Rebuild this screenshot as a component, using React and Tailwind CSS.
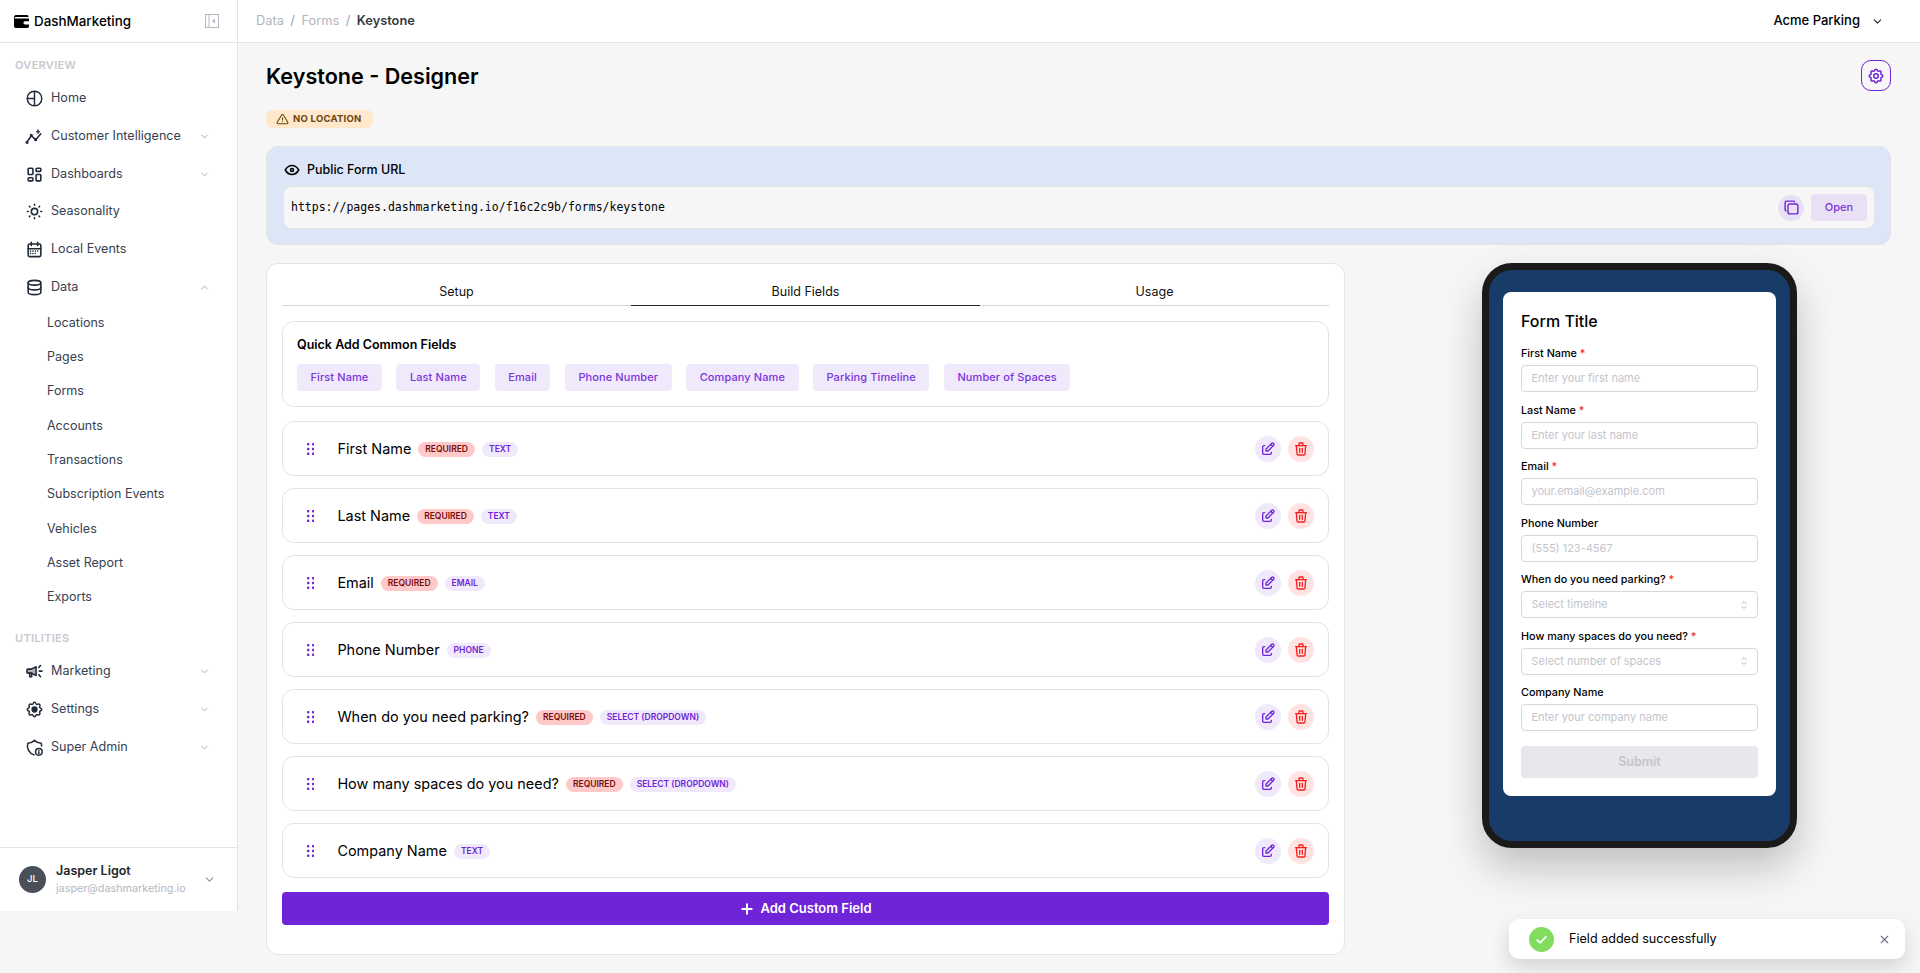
import React from 'react';
import { TbLayoutDashboard, TbSun, TbCalendarMonth, TbDatabase, TbChevronDown, TbChevronUp, TbSettings, TbEye, TbAlertTriangle, TbCopy, TbEdit, TbTrash, TbSelector, TbX, TbPlus } from 'react-icons/tb';

const HomeIcon = ({ className }) => (
  <svg viewBox="0 0 24 24" fill="none" stroke="currentColor" strokeWidth="1.8" className={className}>
    <circle cx="12" cy="12" r="9.2" />
    <path d="M12 3v18M3 12h9" />
  </svg>
);
const SparkLineIcon = ({ className }) => (
  <svg viewBox="0 0 24 24" fill="none" stroke="currentColor" strokeWidth="1.9" strokeLinecap="round" strokeLinejoin="round" className={className}>
    <path d="M2.5 19l5.5-8 5.5 5 6.5-7.5" />
    <circle cx="2.5" cy="19.5" r="1" fill="currentColor" />
    <circle cx="8" cy="10.5" r="1" fill="currentColor" />
    <circle cx="13.5" cy="16" r="1" fill="currentColor" />
    <path d="M16.5 3.5l.7 1.8 1.8.7-1.8.7-.7 1.8-.7-1.8-1.8-.7 1.8-.7z" fill="currentColor" strokeWidth="0.8" />
  </svg>
);
const MegaIcon = ({ className }) => (
  <svg viewBox="0 0 24 24" fill="none" stroke="currentColor" strokeWidth="2" strokeLinecap="round" strokeLinejoin="round" className={className}>
    <path d="M14 6v11l-6-3H3.5a1 1 0 0 1-1-1v-3a1 1 0 0 1 1-1H8z" fill="currentColor" fillOpacity="0.35" />
    <path d="M6 14v4.5h2.5V14" />
    <path d="M18 11.5h3.5M17.5 7l2-2.5M17.5 16l2 2.5" />
  </svg>
);
const GearFillIcon = ({ className }) => (
  <svg viewBox="0 0 24 24" fill="none" stroke="currentColor" strokeWidth="1.9" strokeLinecap="round" strokeLinejoin="round" className={className}>
    <path d="M10.3 4.3c.4-1.8 3-1.8 3.4 0a1.7 1.7 0 0 0 2.6 1c1.5-.9 3.3.8 2.4 2.4a1.7 1.7 0 0 0 1 2.6c1.8.4 1.8 3 0 3.4a1.7 1.7 0 0 0-1 2.6c.9 1.5-.8 3.3-2.4 2.4a1.7 1.7 0 0 0-2.6 1c-.4 1.8-3 1.8-3.4 0a1.7 1.7 0 0 0-2.6-1c-1.5.9-3.3-.8-2.4-2.4a1.7 1.7 0 0 0-1-2.6c-1.8-.4-1.8-3 0-3.4a1.7 1.7 0 0 0 1-2.6c-.9-1.5.8-3.3 2.4-2.4a1.7 1.7 0 0 0 2.6-1z" />
    <circle cx="12" cy="12" r="3" fill="currentColor" />
  </svg>
);
const ShieldInfoIcon = ({ className }) => (
  <svg viewBox="0 0 24 24" fill="none" stroke="currentColor" strokeWidth="1.9" strokeLinecap="round" strokeLinejoin="round" className={className}>
    <path d="M11.5 21.3A12 12 0 0 1 3.5 6.5 12 12 0 0 0 12 3a12 12 0 0 0 8.5 3.5c.3 1.2.4 2.4.4 3.6" />
    <circle cx="17.5" cy="17.5" r="4.2" />
    <path d="M17.5 15.8v.1M17.5 17.5v2" />
  </svg>
);
const Logo = () => (
  <svg viewBox="0 0 15 13" className="w-[15px] h-[13px] text-black" fill="currentColor">
    <path fillRule="evenodd" d="M2 0h11a1.5 1.5 0 0 1 1.5 1.5V2H1.5a.8.8 0 0 0 0 1.6H15v2.6h-4a1.6 1.6 0 0 0 0 3.2h4V11.2A1.8 1.8 0 0 1 13.2 13H1.8A1.8 1.8 0 0 1 0 11.2V2a2 2 0 0 1 2-2z" />
  </svg>
);
const CollapseIcon = () => (
  <svg viewBox="0 0 14 14" className="w-[14px] h-[14px] text-[#b4b8c0]" fill="none" stroke="currentColor" strokeWidth="1">
    <rect x="0.5" y="0.5" width="13" height="13" />
    <path d="M4 .5v13" />
    <path d="M10 4.5v5L7 7z" fill="currentColor" stroke="none" />
  </svg>
);
const Grip = () => (
  <svg viewBox="0 0 7.4 12" className="w-[7.4px] h-[12px] text-[#7024d8]" fill="currentColor">
    <rect x="0" y="0" width="2.4" height="2.4" rx="0.8" /><rect x="5" y="0" width="2.4" height="2.4" rx="0.8" />
    <rect x="0" y="4.8" width="2.4" height="2.4" rx="0.8" /><rect x="5" y="4.8" width="2.4" height="2.4" rx="0.8" />
    <rect x="0" y="9.6" width="2.4" height="2.4" rx="0.8" /><rect x="5" y="9.6" width="2.4" height="2.4" rx="0.8" />
  </svg>
);

const ic = 'w-[19px] h-[19px] shrink-0';
const NavItem = ({ icon: I, label, chevron }) => (
  <div className="h-[37.7px] flex items-center pl-[25px] pr-[27px] text-[12.6px] text-[#374151]">
    <I className={`${ic} text-[#1f2937]`} />
    <span className="ml-[7px] flex-1">{label}</span>
    {chevron === 'down' && <TbChevronDown className="w-[11px] h-[11px] text-[#9ca3af]" />}
    {chevron === 'up' && <TbChevronUp className="w-[11px] h-[11px] text-[#9ca3af]" />}
  </div>
);

const subs = ['Locations', 'Pages', 'Forms', 'Accounts', 'Transactions', 'Subscription Events', 'Vehicles', 'Asset Report', 'Exports'];

const Sidebar = () => (
  <aside className="w-[238px] h-[911px] shrink-0 bg-white border-r border-[#e3e3e3] flex flex-col">
    <div className="h-[43px] shrink-0 border-b border-[#e3e3e3] flex items-center pl-[14px] pr-[18px]">
      <Logo />
      <span className="ml-[5px] flex-1 text-[13.4px] font-medium text-black">DashMarketing</span>
      <CollapseIcon />
    </div>
    <div className="flex-1 flex flex-col">
      <div className="pl-[15px] mt-[15px] mb-[7px] h-[15px] leading-[15px] text-[11px] font-semibold tracking-[0.3px] text-[#c7c9d1]">OVERVIEW</div>
      <NavItem icon={HomeIcon} label="Home" />
      <NavItem icon={SparkLineIcon} label="Customer Intelligence" chevron="down" />
      <NavItem icon={TbLayoutDashboard} label="Dashboards" chevron="down" />
      <NavItem icon={TbSun} label="Seasonality" />
      <NavItem icon={TbCalendarMonth} label="Local Events" />
      <NavItem icon={TbDatabase} label="Data" chevron="up" />
      <div className="flex flex-col">
        {subs.map((s) => (
          <div key={s} className="h-[34.3px] flex items-center pl-[47px] text-[12.5px] text-[#374151]">{s}</div>
        ))}
      </div>
      <div className="pl-[15px] mt-[16px] mb-[7px] h-[15px] leading-[15px] text-[11px] font-semibold tracking-[0.3px] text-[#c7c9d1]">UTILITIES</div>
      <NavItem icon={MegaIcon} label="Marketing" chevron="down" />
      <NavItem icon={GearFillIcon} label="Settings" chevron="down" />
      <NavItem icon={ShieldInfoIcon} label="Super Admin" chevron="down" />
    </div>
    <div className="h-[64px] shrink-0 border-t border-[#e3e3e3] flex items-center pl-[19px] pr-[21px]">
      <div className="w-[27px] h-[27px] rounded-full bg-[#495057] text-white text-[9.5px] font-medium flex items-center justify-center">JL</div>
      <div className="ml-[10px] flex-1">
        <div className="text-[12.5px] leading-[18px] font-semibold text-[#212529]">Jasper Ligot</div>
        <div className="text-[10.8px] leading-[18px] text-[#b4b8bf]">jasper@dashmarketing.io</div>
      </div>
      <TbChevronDown className="w-[13px] h-[13px] text-[#8f949c]" />
    </div>
  </aside>
);

const chips = ['First Name', 'Last Name', 'Email', 'Phone Number', 'Company Name', 'Parking Timeline', 'Number of Spaces'];
const fields = [
  ['First Name', true, 'TEXT'],
  ['Last Name', true, 'TEXT'],
  ['Email', true, 'EMAIL'],
  ['Phone Number', false, 'PHONE'],
  ['When do you need parking?', true, 'SELECT (DROPDOWN)'],
  ['How many spaces do you need?', true, 'SELECT (DROPDOWN)'],
  ['Company Name', false, 'TEXT'],
];

const FieldRow = ({ name, req, type }) => (
  <div className="h-[55px] shrink-0 bg-white border border-[#e3e3e3] rounded-[12px] flex items-center pl-[24px] pr-[14px] pt-[1px]">
    <Grip />
    <span className="ml-[23px] text-[14.45px] font-normal text-black">{name}</span>
    {req && <span className="ml-[7px] h-[15px] px-[7px] rounded-full bg-[#ffc9c9] text-[#7a0b0b] text-[8.5px] font-semibold leading-[15px]">REQUIRED</span>}
    <span className="ml-[7px] h-[15px] px-[7px] rounded-full bg-[#f0e8fb] text-[#7024d8] text-[8.5px] font-semibold leading-[15px]">{type}</span>
    <div className="ml-auto flex items-center gap-[7px]">
      <div className="w-[26px] h-[26px] rounded-full bg-[#f0e8fb] flex items-center justify-center"><TbEdit className="w-[16px] h-[16px] text-[#7024d8]" /></div>
      <div className="w-[26px] h-[26px] rounded-full bg-[#ffe3e3] flex items-center justify-center"><TbTrash className="w-[16px] h-[16px] text-[#fa1e1e]" /></div>
    </div>
  </div>
);

const FormInput = ({ label, req, ph, select }) => (
  <div className="h-[47px]">
    <div className="h-[20px] text-[10.8px] leading-[18px] font-medium text-black">
      {label}{req && <span className="text-[#fa1e1e]"> *</span>}
    </div>
    <div className="h-[27px] bg-white border border-[#d7d7dc] rounded-[4px] flex items-center pl-[9.5px] pr-[7px] text-[11px] text-[#c4c4ca]">
      <span className="flex-1">{ph}</span>
      {select && <TbSelector className="w-[12px] h-[12px] text-[#b4b4ba]" />}
    </div>
  </div>
);

export default function App() {
  return (
    <div className="h-[973px] overflow-hidden flex bg-[#f6f6f6] font-['Inter',sans-serif]">
      <Sidebar />
      <div className="flex-1 min-w-0 flex flex-col">
        <header className="h-[43px] shrink-0 bg-white border-b border-[#e3e3e3] flex items-center pl-[18px] pr-[36px] text-[12.8px]">
          <span className="text-[#b1b5bc]">Data</span>
          <span className="mx-[6.5px] text-[#9ca3af]">/</span>
          <span className="text-[#b1b5bc]">Forms</span>
          <span className="mx-[6.5px] text-[#9ca3af]">/</span>
          <span className="font-semibold text-[#343a40]">Keystone</span>
          <span className="ml-auto text-[13px] font-medium text-black">Acme Parking</span>
          <TbChevronDown className="ml-[11px] w-[13px] h-[13px] text-[#212529]" />
        </header>
        <main className="flex-1 min-h-0 pl-[28px] pr-[29px]">
          <div className="flex items-start justify-between pt-[18px]">
            <div>
              <h1 className="text-[21.6px] leading-[30px] font-semibold text-black">Keystone - Designer</h1>
              <div className="mt-[19px] flex w-fit items-center h-[18px] pl-[10px] pr-[11px] rounded-[6px] bg-[#ffe8cc] text-[#6b4510] text-[9.5px] font-bold tracking-[0.25px]">
                <TbAlertTriangle className="w-[13px] h-[13px] mr-[4px]" />NO LOCATION
              </div>
            </div>
            <div className="mt-[-1px] w-[30px] h-[31px] rounded-[10px] border border-[#7024d8] flex items-center justify-center">
              <TbSettings className="w-[18px] h-[18px] text-[#7024d8]" />
            </div>
          </div>
          <section className="mt-[18px] h-[99px] rounded-[12px] bg-[#dce6f7] border border-[#e3e3e3] pl-[16px] pr-[15px] flex flex-col">
            <div className="h-[39px] pt-[7px] flex items-center text-[12.5px] font-medium text-black">
              <TbEye className="w-[18px] h-[18px] mr-[6px]" />Public Form URL
            </div>
            <div className="h-[43px] rounded-[8px] bg-[#f6f6f6] border border-[#e3e3e3] flex items-center pl-[7px] pr-[7px]">
              <span className="flex-1 font-['DejaVu_Sans_Mono',monospace] text-[11.5px] text-black">https://pages.dashmarketing.io/f16c2c9b/forms/keystone</span>
              <div className="w-[26px] h-[26px] rounded-full bg-[#e9e0f6] flex items-center justify-center"><TbCopy className="w-[17px] h-[17px] text-[#7024d8]" /></div>
              <div className="ml-[7px] w-[56px] h-[27px] rounded-[4px] bg-[#e9e0f6] flex items-center justify-center text-[11px] font-medium text-[#7a34dc]">Open</div>
            </div>
          </section>
          <div className="mt-[18px] flex items-start">
            <section className="w-[1079px] shrink-0 h-[692px] bg-white border border-[#e3e3e3] rounded-[12px] px-[15px] pt-[15px]">
              <div className="flex h-[27px] text-[12.5px] text-[#111] border-b border-[#d5d5d5]">
                <div className="flex-1 flex items-center justify-center">Setup</div>
                <div className="flex-1 flex items-center justify-center border-b border-[#212529] -mb-px">Build Fields</div>
                <div className="flex-1 flex items-center justify-center">Usage</div>
              </div>
              <div className="mt-[15px] h-[86px] border border-[#e3e3e3] rounded-[12px] px-[14px] pt-[14px]">
                <div className="text-[12.5px] leading-[18px] font-semibold text-black">Quick Add Common Fields</div>
                <div className="mt-[10px] flex gap-[14.5px]">
                  {chips.map((c) => (
                    <div key={c} className="h-[27px] px-[13.5px] rounded-[4px] bg-[#f0e8fb] flex items-center text-[11px] font-medium tracking-[0.1px] text-[#7a34dc]">{c}</div>
                  ))}
                </div>
              </div>
              <div className="mt-[14px] flex flex-col gap-[12px]">
                {fields.map(([n, r, t]) => <FieldRow key={n} name={n} req={r} type={t} />)}
              </div>
              <div className="mt-[14px] h-[33px] pt-[1px] rounded-[4px] bg-[#7024d8] flex items-center justify-center text-white text-[13px] font-semibold">
                <TbPlus className="w-[16px] h-[16px] mr-[5px]" strokeWidth={3} />Add Custom Field
              </div>
            </section>
            <div className="flex-1 ml-[43px] flex justify-center">
              <div className="w-[315px] h-[585px] rounded-[30px] border-[7px] border-[#1a1a1a] bg-[#193b68] shadow-[0_20px_40px_rgba(0,0,0,0.22)] px-[14px] pt-[22px]">
                <div className="h-[504px] bg-white rounded-[8px] px-[18px] pt-[18px]">
                  <div className="h-[22px] text-[16px] leading-[22px] font-medium text-black">Form Title</div>
                  <div className="mt-[13px] flex flex-col gap-[9.5px]">
                    <FormInput label="First Name" req ph="Enter your first name" />
                    <FormInput label="Last Name" req ph="Enter your last name" />
                    <FormInput label="Email" req ph="your.email@example.com" />
                    <FormInput label="Phone Number" ph="(555) 123-4567" />
                    <FormInput label="When do you need parking?" req ph="Select timeline" select />
                    <FormInput label="How many spaces do you need?" req ph="Select number of spaces" select />
                    <FormInput label="Company Name" ph="Enter your company name" />
                  </div>
                  <div className="mt-[15px] h-[32px] rounded-[4px] bg-[#e8e7eb] flex items-center justify-center text-[12.5px] font-semibold text-[#c4c4ca]">Submit</div>
                </div>
              </div>
            </div>
          </div>
        </main>
      </div>
      <div className="absolute left-[1509px] top-[919px] w-[396px] h-[40px] bg-white rounded-[10px] shadow-[0_8px_20px_rgba(0,0,0,0.15)] flex items-center pl-[20px] pr-[14px]">
        <div className="w-[25px] h-[25px] rounded-full bg-[#82dc5f] flex items-center justify-center">
          <svg viewBox="0 0 12 12" className="w-[13px] h-[13px]" fill="none" stroke="white" strokeWidth="1.6" strokeLinecap="round" strokeLinejoin="round"><path d="M2 6.5l2.8 2.5L10 3.5" /></svg>
        </div>
        <span className="ml-[15px] flex-1 text-[12.6px] text-black">Field added successfully</span>
        <TbX className="w-[13px] h-[13px] text-[#6b7280]" />
      </div>
    </div>
  );
}
